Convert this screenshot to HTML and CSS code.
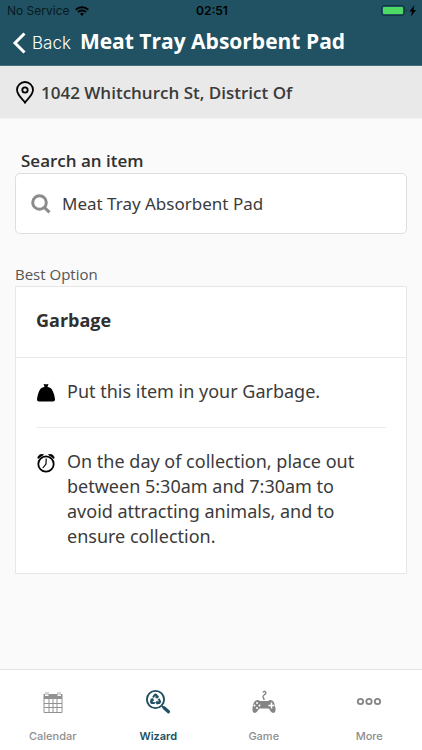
FILE: index.html
```html
<!DOCTYPE html>
<html lang="en">
<head>
<meta charset="utf-8">
<meta name="viewport" content="width=device-width, initial-scale=1">
<title>Meat Tray Absorbent Pad</title>
<link rel="stylesheet" href="styles.css">
</head>
<body>
<header class="header">
  <div class="status">
    <div class="status-left">
      <span>No Service</span>
      <svg width="14" height="10" viewBox="0 0 14 10" fill="none" stroke="#000" stroke-width="2"><path d="M.8 3.700a8.800 8.800 0 0 1 12.400 0M3 6.100a5.700 5.700 0 0 1 8 0"/><path d="M5 7.800a2.800 2.800 0 0 1 4 0L7 10z" fill="#000" stroke="none"/></svg>
    </div>
    <span class="time">02:51</span>
    <div class="status-right">
      <svg width="36" height="12" viewBox="0 0 36 12"><rect x=".5" y=".5" width="23" height="10" rx="2.500" fill="none" stroke="#123642"/><rect x="2" y="2" width="20" height="7" rx="1" fill="#4cd964"/><path d="M25 4v3q2-1.500 0-3" fill="#123642"/><path d="M33.500 0l-5 6.500h2.500L30 11.500 35 5h-2.600z" fill="#000"/></svg>
    </div>
  </div>
  <nav class="navbar">
    <a class="back" href="#">
      <svg width="14" height="22" viewBox="0 0 14 22" fill="none" stroke="currentColor" stroke-width="3"><path d="M12.500 1.500L3 11l9.500 9.500"/></svg>
      <span>Back</span>
    </a>
    <h1>Meat Tray Absorbent Pad</h1>
  </nav>
</header>
<div class="address">
  <svg width="18" height="23" viewBox="0 0 18 23" fill="none" stroke="#000" stroke-width="1.800"><path d="M9 21.500C7.800 19.200 1 14.500 1 8.800a8 7.800 0 0 1 16 0C17 14.500 10.200 19.200 9 21.500z"/><circle cx="9" cy="9" r="2.700"/></svg>
  <span>1042 Whitchurch St, District Of</span>
</div>
<main class="content">
  <label class="search-label" for="search">Search an item</label>
  <div class="search">
    <svg width="20" height="20" viewBox="0 0 20 20" fill="none" stroke="#8c8c8c" stroke-width="3"><circle cx="8.500" cy="8.500" r="6.800"/><path d="M13.300 13.300l5.200 5"/></svg>
    <input id="search" type="text" value="Meat Tray Absorbent Pad">
  </div>
  <p class="section-label">Best Option</p>
  <section class="card">
    <h2>Garbage</h2>
    <ul>
      <li>
        <svg width="20" height="20" viewBox="0 0 20 20"><path d="M7.500.7l1 .6h3l1-.6-1 3.200c4 .6 4.800 2.500 6.300 6.900.8 2.500 1.200 5 1.200 6q0 1.800-2 1.800H3q-2 0-2-1.800c0-1 .4-3.500 1.200-6C3.700 6.400 4.500 4.500 8.500 3.900z" fill="#000"/></svg>
        <span>Put this item in your Garbage.</span>
      </li>
      <li>
        <svg width="20" height="20" viewBox="0 0 20 20" fill="none" stroke="#000"><circle cx="10" cy="11" r="7.700" stroke-width="1.800"/><path d="M10.200 5.500L10 11l-3.200 4" stroke-width="1.200"/><path d="M2 5.500C1.500 3 4 .7 7.500 1.700z M18 5.500c.5-2.500-2-4.800-5.500-3.800z" fill="#000" stroke-width=".8"/></svg>
        <span>On the day of collection, place out between 5:30am and 7:30am to avoid attracting animals, and to ensure collection.</span>
      </li>
    </ul>
  </section>
</main>
<nav class="tabs">
  <a href="#">
    <svg width="26" height="26" viewBox="0 0 26 26"><path d="M3.500 5H5v2h3.500V5h9v2H21V5h1.500v18q0 1-1 1h-17q-1 0-1-1z" fill="#929292"/><path d="M6 3v3M8 3v3M18 3v3M20 3v3" stroke="#929292" stroke-width=".8"/><path d="M4.500 10h4v4h-4zM9.500 10h3v4h-3zM13.500 10h3v4h-3zM17.500 10h4v4h-4zM4.500 15h4v3h-4zM9.500 15h3v3h-3zM13.500 15h3v3h-3zM17.500 15h4v3h-4zM4.500 19h4v4h-4zM9.500 19h3v4h-3zM13.500 19h3v4h-3zM17.500 19h4v4h-4z" fill="#fff"/></svg>
    <span>Calendar</span>
  </a>
  <a class="active" href="#" aria-current="page">
    <svg width="26" height="26" viewBox="0 0 26 26" fill="none" stroke="#205062"><circle cx="10.500" cy="10.500" r="8.600" stroke-width="1.900"/><path d="M17 17l1.800 1.800" stroke-width="1.500"/><path d="M19 18.800l4.500 4" stroke-width="3.200" stroke-linecap="round"/><g fill="#205062" stroke="none"><path id="arrow" d="M7.200 8.100L9 5.200q1.500-1.200 3 0l1.100 1.700.9-.5-.8 3.200-3.300-.7 1-.6-.8-1.200-1.200 2z"/><use href="#arrow" transform="rotate(120 10.500 10.800)"/><use href="#arrow" transform="rotate(240 10.500 10.800)"/></g></svg>
    <span>Wizard</span>
  </a>
  <a href="#">
    <svg width="26" height="26" viewBox="0 0 26 26"><path d="M12 3.500q1-2 2.500-.5c1.800 2-3.300 3.200-2.500 5 .4.900 1 .8 1 3" fill="none" stroke="#858585" stroke-width="1.500"/><path d="M5 11.500q2-1 4 .5h8q2-1.500 4-.5c2 .5 3 4 3.500 8 .4 3-1 5-3 4.300C19.500 23 19 20.500 17.500 19.500h-9C7 20.500 6.500 23 4.500 23.800c-2 .7-3.400-1.300-3-4.300C2 15.500 3 12 5 11.500z" fill="#858585"/><path d="M20.500 13.500v6M17.500 16.500h6" stroke="#fff" stroke-width="1.500"/><g fill="#fff"><circle cx="6" cy="14" r="1"/><circle cx="6" cy="19" r="1"/><circle cx="3.500" cy="16.500" r="1"/><circle cx="8.500" cy="16.500" r="1"/></g></svg>
    <span>Game</span>
  </a>
  <a href="#">
    <svg width="26" height="26" viewBox="0 0 26 26" fill="none" stroke="#858585" stroke-width="1.800"><circle cx="4.500" cy="12.500" r="2.700"/><circle cx="13" cy="12.500" r="2.700"/><circle cx="21.500" cy="12.500" r="2.700"/></svg>
    <span>More</span>
  </a>
</nav>
</body>
</html>
```
FILE: styles.css
```css
* { box-sizing: border-box; }
body {
  margin: 0;
  min-height: 100vh;
  display: flex;
  flex-direction: column;
  background: #fafafa;
  color: #3b3b3b;
  font-family: "Open Sans", sans-serif;
}
svg { display: block; flex: none; }
a { color: inherit; text-decoration: none; }
h1, h2, p, ul { margin: 0; padding: 0; }
.header { background: #205263; border-bottom: 1px solid #426d7b; }
.status {
  display: grid;
  grid-template-columns: 1fr auto 1fr;
  align-items: center;
  height: 22px;
  padding: 0 5px 0 7px;
  color: #081a20;
  font: 12px/22px Inter, sans-serif;
}
.status-left { display: flex; align-items: center; gap: 5px; }
.status-right { justify-self: end; }
.time { color: #000; font-weight: 600; }
.navbar {
  display: flex;
  align-items: center;
  gap: 9px;
  padding: 0 12px 5px;
  color: #fff;
}
.back { display: flex; align-items: center; gap: 6px; padding-top: 4px; font: 300 17px/24px Inter, sans-serif; }
h1 { font-size: 21px; line-height: 38px; font-weight: 700; white-space: nowrap; }
.address {
  display: flex;
  align-items: center;
  gap: 7px;
  height: 53px;
  padding: 1px 16px 0;
  background: #e9e9e9;
  border-bottom: 1px solid #f1f1f1;
  font-size: 17px;
  font-weight: 600;
}
.content { flex: 1; padding: 30px 15px 16px; }
.search-label { display: block; padding: 0 0 1px 6px; font-size: 17px; line-height: 23px; font-weight: 600; color: #303030; }
.search {
  display: flex;
  align-items: center;
  gap: 11px;
  height: 61px;
  padding: 0 15px;
  background: #fff;
  border: 1px solid #dedede;
  border-radius: 5px;
}
.search input {
  flex: 1;
  min-width: 0;
  padding: 0;
  border: 0;
  outline: 0;
  background: none;
  color: #3b3b3b;
  font: 17px/25px "Noto Sans", sans-serif;
}
.section-label { margin-top: 29px; padding-bottom: 1px; font-size: 15px; line-height: 22px; color: #555; }
.card { background: #fff; border: 1px solid #e7e7e7; }
h2 { padding: 19px 20px 22px; border-bottom: 1px solid #ebebeb; font-size: 18px; line-height: 29px; font-weight: 700; color: #303030; }
ul { list-style: none; padding: 0 20px; }
li { display: flex; gap: 11px; padding: 21px 8px 24px 0; font: 18px/25px "Noto Sans", sans-serif; }
li:first-child { padding-bottom: 23px; }
li + li { border-top: 1px solid #ebebeb; }
li svg { margin-top: 4px; }
.tabs {
  display: grid;
  grid-template-columns: repeat(4, 1fr);
  height: 81px;
  padding-top: 19px;
  background: #fff;
  border-top: 1px solid #e4e4e4;
}
.tabs a {
  display: flex;
  flex-direction: column;
  align-items: center;
  gap: 13px;
  color: #8e8e8e;
  font: 500 11px/16px Inter, sans-serif;
}
.tabs .active { color: #205062; font-weight: 600; }
```
